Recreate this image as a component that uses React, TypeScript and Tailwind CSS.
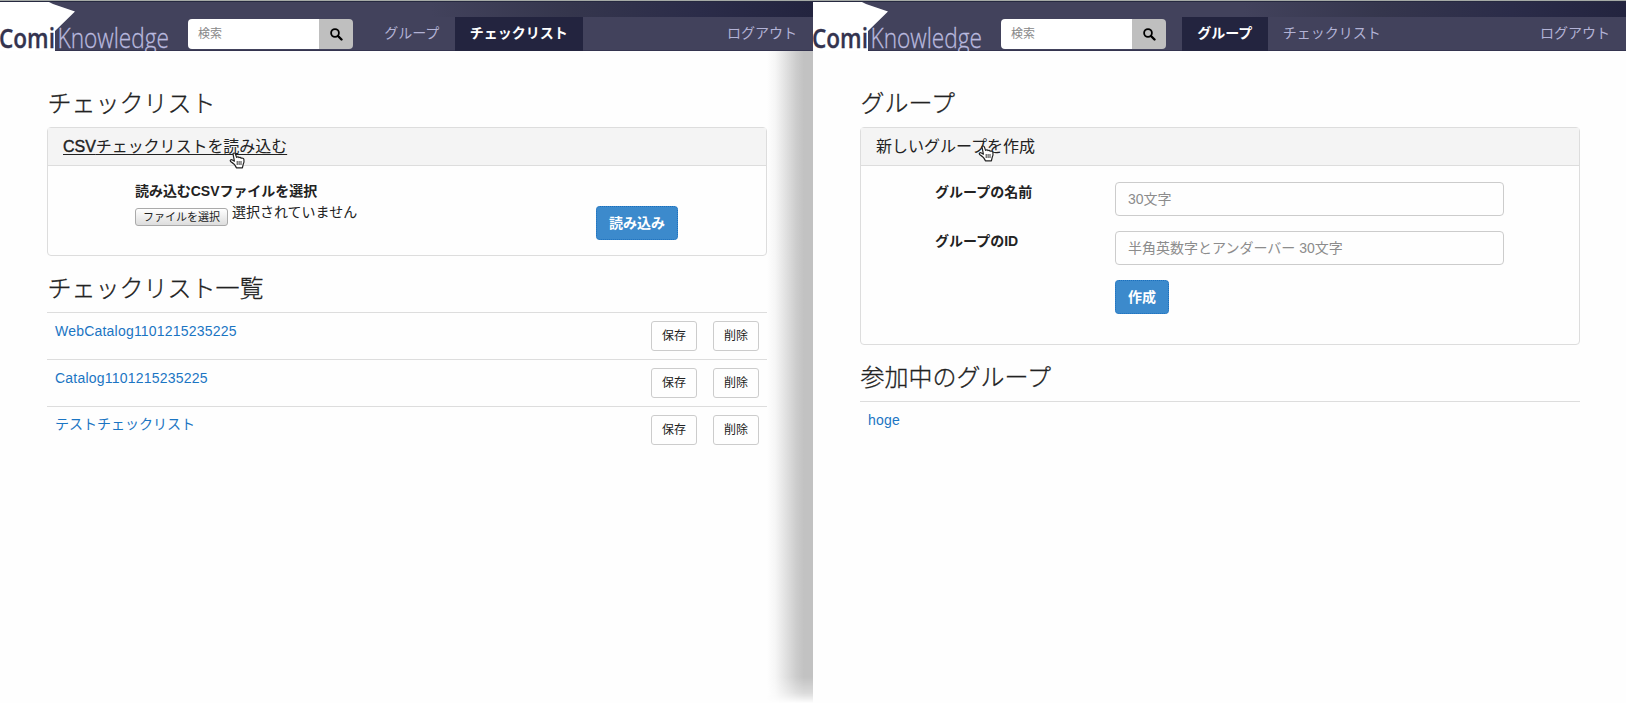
import React from "react";

const base = "font-['Liberation_Sans','Noto_Sans_CJK_JP',sans-serif]";

function Logo() {
  return (
    <svg className="-mb-px h-[49px] w-[180px] shrink-0" viewBox="0 0 180 49" aria-label="ComiKnowledge">
      <path d="M0 -1H47L53 2L75 9.5L55 29V49H0Z" fill="#fff" />
      <text x="-1" y="45.7" textLength="56" lengthAdjust="spacingAndGlyphs" fontFamily="Open Sans, sans-serif" fontWeight="600" fontSize="27" fill="#34344f" stroke="#34344f" strokeWidth=".3">Comi</text>
      <text x="57.5" y="45.7" textLength="111.5" lengthAdjust="spacingAndGlyphs" fontFamily="Open Sans, sans-serif" fontWeight="300" fontSize="27" fill="#b9b9df" stroke="#b9b9df" strokeWidth=".3">Knowledge</text>
    </svg>
  );
}

function SearchIcon() {
  return (
    <svg className="h-[13px] w-[13px]" viewBox="0 0 13 13" fill="none" stroke="#000">
      <circle cx="5" cy="5" r="3.9" strokeWidth="1.8" />
      <path d="M8 8L11.5 11.5" strokeWidth="2.4" strokeLinecap="round" />
    </svg>
  );
}

function Hand({ className }: { className: string }) {
  return (
    <svg className={"absolute h-[17px] w-[17px] " + className} viewBox="0 0 17 17">
      <path d="M4 1.8C4.5.6 6 .8 6.4 2L7.6 5.4C8.3 4.6 9.5 4.8 9.9 5.6C10.8 5 11.8 5.3 12.1 6.2C13.2 5.8 14.6 6.3 14.9 7.4C15.3 9.6 15 11 14.2 12.4L13.4 15.8H7.4C6.6 13.6 4.8 11.6 1.6 9.6C.6 8.4 2 7.2 3.4 8L5.4 9.2Z" fill="#fff" stroke="#222" strokeWidth="1.2" strokeLinejoin="round" />
      <path d="M8.2 9V13M10.1 9V13M12 9V13" stroke="#222" strokeWidth=".9" />
    </svg>
  );
}

function Navbar({ active }: { active: number }) {
  return (
    <header className="flex h-[51px] shrink-0 flex-col border-t border-t-[#a5aaa6] bg-[#42425c]">
      <div className="flex h-[50px] border-t border-b border-t-[#262940] border-b-[#34344f] bg-[linear-gradient(90deg,#42425c_0,#42425c_53%,#35364d_70%,#2b2c49_86%,#23243f_100%)] bg-[length:100%_15px] bg-no-repeat">
        <Logo />
        <div className="mt-[17px] ml-2 flex h-[30px] w-[165px] overflow-hidden rounded">
          <div className="flex w-[131px] items-center bg-white pl-2.5 text-xs text-[#888]">検索</div>
          <div className="flex flex-1 items-center justify-center bg-[#bfbfbf]"><SearchIcon /></div>
        </div>
        <nav className="mt-[15px] ml-4 flex h-[34px] flex-1 pr-4 text-sm text-[#b2b2d5]">
          {["グループ", "チェックリスト"].map((t, i) => (
            <div key={t} className={i === active ? "flex items-center bg-[#23243f] px-[15px] pb-0.5 font-bold text-white" : "flex items-center px-[15px] pb-0.5"}>
              <span className="px-[0.2px]">{t}</span>
            </div>
          ))}
          <div className="ml-auto flex items-center pb-0.5">ログアウト</div>
        </nav>
      </div>
    </header>
  );
}

function Small({ children }: { children: React.ReactNode }) {
  return <div className="flex h-[30px] w-[46px] items-center justify-center rounded-[3px] border border-[#ccc] text-xs text-[#222]">{children}</div>;
}

function Primary({ children, className }: { children: React.ReactNode; className: string }) {
  return <div className={"flex h-[34px] items-center justify-center rounded border border-dotted border-[#1b6fbd] bg-[#3c8acc] pb-px text-sm font-bold text-white " + className}>{children}</div>;
}

function Heading({ children }: { children: React.ReactNode }) {
  return <h2 className="h-[37px] pl-[0.5px] text-2xl leading-[28px] font-light [-webkit-text-stroke:0.3px_#222]">{children}</h2>;
}

function Checklists() {
  return (
    <section className="relative flex w-[813px] flex-col overflow-hidden bg-[#fefefe]">
      <Navbar active={1} />
      <div className="absolute top-[51px] right-0 bottom-0 w-[46px] bg-[linear-gradient(90deg,#fefefe_0%,#f6f6f6_18%,#e0e0e0_42%,#ccc_64%,#c2c2c2_80%,#c2c2c2_100%)] [mask-image:linear-gradient(to_top,transparent_0,rgba(0,0,0,0.6)_10px,black_26px)]" />
      <main className="ml-[47px] w-[720px] pt-[39px]">
        <Heading>チェックリスト</Heading>
        <div className="mb-[19px] h-[129px] rounded border border-[#ddd]">
          <div className="relative flex h-[38px] items-center border-b border-[#ddd] bg-[#f4f4f4] pl-[15px]">
            <span className="text-base tracking-[-0.05px] underline underline-offset-2"><span className="[-webkit-text-stroke:0.4px_#222]">CSV</span>チェックリストを読み込む</span>
            <Hand className="top-[24px] left-[181px]" />
          </div>
          <div className="flex pl-[87px]">
            <div className="w-[461px] pt-[15px]">
              <div className="text-sm leading-5 font-bold tracking-[-0.05px]">読み込むCSVファイルを選択</div>
              <div className="flex gap-1">
                <div className="mt-[7px] flex h-[18px] w-[93px] items-center justify-center rounded-[3px] border border-[#aaa] bg-linear-to-b from-white to-[#ddd] text-[11px]">ファイルを選択</div>
                <span className="text-sm leading-[22px]">選択されていません</span>
              </div>
            </div>
            <Primary className="mt-10 w-[82px]">読み込み</Primary>
          </div>
        </div>
        <Heading>チェックリスト一覧</Heading>
        {["WebCatalog1101215235225", "Catalog1101215235225", "テストチェックリスト"].map((t) => (
          <div key={t} className="flex h-[47px] gap-4 border-t border-[#ddd] px-2 pt-2">
            <span className={/^[A-Z]/.test(t) ? "flex-1 text-sm leading-5 tracking-[0.21px] text-[#1b75c3]" : "flex-1 text-sm leading-[18px] text-[#1b75c3]"}>{t}</span>
            <Small>保存</Small>
            <Small>削除</Small>
          </div>
        ))}
      </main>
    </section>
  );
}

function Field({ label, hint }: { label: string; hint: string }) {
  return (
    <div className="mb-[15px] flex h-[34px]">
      <label className="w-[180px] text-sm leading-5 font-bold">{label}</label>
      <div className="flex w-[389px] items-center rounded border border-[#ccc] pl-3 text-sm text-[#8c8c8c]">{hint}</div>
    </div>
  );
}

function Groups() {
  return (
    <section className="flex w-[813px] flex-col bg-[#fefefe]">
      <Navbar active={0} />
      <main className="ml-[47px] w-[720px] pt-[39px]">
        <Heading>グループ</Heading>
        <div className="mb-[19px] h-[218px] rounded border border-[#ddd]">
          <div className="relative flex h-[38px] items-center border-b border-[#ddd] bg-[#f4f4f4] pl-[15px]">
            <span className="text-base">新しいグループを作成</span>
            <Hand className="top-[17px] left-[117px]" />
          </div>
          <div className="pt-4 pl-[74px]">
            <Field label="グループの名前" hint="30文字" />
            <Field label="グループのID" hint="半角英数字とアンダーバー 30文字" />
            <Primary className="ml-[180px] w-[54px]">作成</Primary>
          </div>
        </div>
        <Heading>参加中のグループ</Heading>
        <div className="border-t border-[#ddd] px-2 pt-2 text-sm leading-5 tracking-[0.2px] text-[#1b75c3]">hoge</div>
      </main>
    </section>
  );
}

export default function App() {
  return (
    <div className={"flex h-[703px] w-[1626px] overflow-hidden text-[#222] " + base}>
      <Checklists />
      <Groups />
    </div>
  );
}
